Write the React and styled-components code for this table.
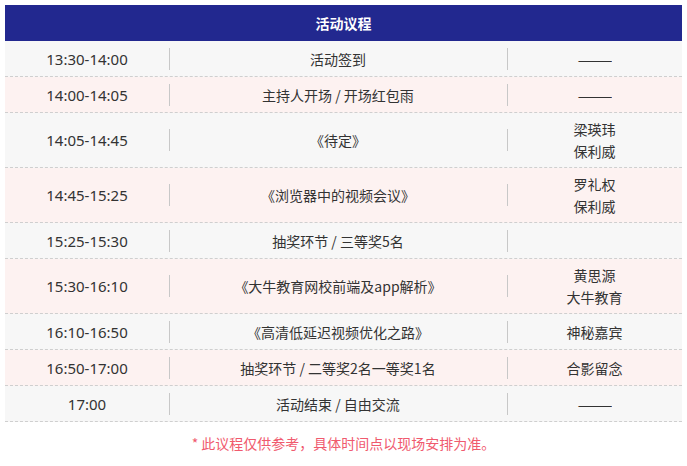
import React from "react";
import styled, { createGlobalStyle } from "styled-components";

const Global = createGlobalStyle`
  html, body { margin: 0; padding: 0; background: #fff; }
  body {
    font-family: "Noto Sans", "Noto Sans CJK SC", sans-serif;
    color: #333;
  }
`;

const Page = styled.div`
  padding: 5px;
  width: 677px;
`;

const Table = styled.div`
  display: flex;
  flex-direction: column;
`;

const Header = styled.div`
  height: 36px;
  background: #22288f;
  color: #fff;
  font-family: "Noto Sans CJK SC", sans-serif;
  font-weight: 700;
  font-size: 14px;
  display: flex;
  align-items: center;
  justify-content: center;
`;

const Row = styled.div`
  display: grid;
  grid-template-columns: 164px 338px 175px;
  min-height: 35px;
  background: ${(p) => (p.$alt ? "#fdf2f1" : "#f7f7f7")};
  border-bottom: 1px dashed #cfcfcf;
  font-size: 14px;
  line-height: 22px;
`;

const Cell = styled.div`
  position: relative;
  display: flex;
  flex-direction: column;
  align-items: center;
  justify-content: center;
  text-align: center;
  padding: 5px 0;
  font-family: ${(p) => (p.$time ? '"Noto Sans", "Noto Sans CJK SC", sans-serif' : '"Noto Sans CJK SC", sans-serif')};
  font-size: ${(p) => (p.$time ? "15px" : "14px")};
  color: #333;
  ${(p) =>
    p.$divider &&
    `
    &::before {
      content: "";
      position: absolute;
      left: 0;
      top: 50%;
      width: 1px;
      height: 22px;
      margin-top: -11px;
      background: #c8c8c8;
    }
  `}
`;

const Dash = styled.span`
  display: inline-block;
  letter-spacing: -1px;
  transform: scaleX(1.5);
  color: #333;
`;

const Note = styled.div`
  margin-top: 10px;
  text-align: center;
  font-family: "Noto Sans CJK SC", sans-serif;
  font-size: 14px;
  line-height: 22px;
  color: #f05a6e;
`;

const rows = [
  ["13:30-14:00", "活动签到", ["——"]],
  ["14:00-14:05", "主持人开场 / 开场红包雨", ["——"]],
  ["14:05-14:45", "《待定》", ["梁瑛玮", "保利威"]],
  ["14:45-15:25", "《浏览器中的视频会议》", ["罗礼权", "保利威"]],
  ["15:25-15:30", "抽奖环节 / 三等奖5名", []],
  ["15:30-16:10", "《大牛教育网校前端及app解析》", ["黄思源", "大牛教育"]],
  ["16:10-16:50", "《高清低延迟视频优化之路》", ["神秘嘉宾"]],
  ["16:50-17:00", "抽奖环节 / 二等奖2名一等奖1名", ["合影留念"]],
  ["17:00", "活动结束 / 自由交流", ["——"]],
];

export default function App() {
  return (
    <Page>
      <Global />
      <Table>
        <Header>活动议程</Header>
        {rows.map(([time, topic, who], i) => (
          <Row key={i} $alt={i % 2 === 1}>
            <Cell $time>{time}</Cell>
            <Cell $divider>{topic}</Cell>
            <Cell $divider>
              {who.map((w, j) =>
                w === "——" ? <Dash key={j}>{w}</Dash> : <span key={j}>{w}</span>
              )}
            </Cell>
          </Row>
        ))}
      </Table>
      <Note>* 此议程仅供参考，具体时间点以现场安排为准。</Note>
    </Page>
  );
}
